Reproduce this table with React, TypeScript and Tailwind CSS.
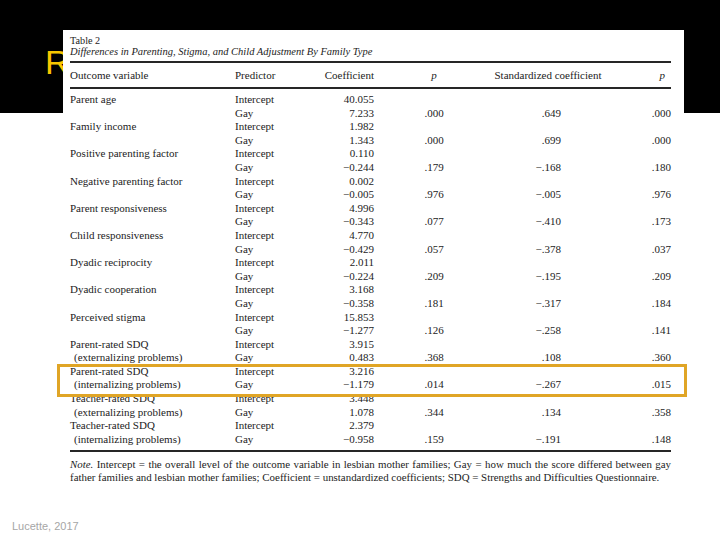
const rows: [string, string, string, string, string, string][] = [
  ["Parent age", "Intercept", "40.055", "", "", ""],
  ["", "Gay", "7.233", ".000", ".649", ".000"],
  ["Family income", "Intercept", "1.982", "", "", ""],
  ["", "Gay", "1.343", ".000", ".699", ".000"],
  ["Positive parenting factor", "Intercept", "0.110", "", "", ""],
  ["", "Gay", "\u22120.244", ".179", "\u2212.168", ".180"],
  ["Negative parenting factor", "Intercept", "0.002", "", "", ""],
  ["", "Gay", "\u22120.005", ".976", "\u2212.005", ".976"],
  ["Parent responsiveness", "Intercept", "4.996", "", "", ""],
  ["", "Gay", "\u22120.343", ".077", "\u2212.410", ".173"],
  ["Child responsiveness", "Intercept", "4.770", "", "", ""],
  ["", "Gay", "\u22120.429", ".057", "\u2212.378", ".037"],
  ["Dyadic reciprocity", "Intercept", "2.011", "", "", ""],
  ["", "Gay", "\u22120.224", ".209", "\u2212.195", ".209"],
  ["Dyadic cooperation", "Intercept", "3.168", "", "", ""],
  ["", "Gay", "\u22120.358", ".181", "\u2212.317", ".184"],
  ["Perceived stigma", "Intercept", "15.853", "", "", ""],
  ["", "Gay", "\u22121.277", ".126", "\u2212.258", ".141"],
  ["Parent-rated SDQ", "Intercept", "3.915", "", "", ""],
  ["(externalizing problems)", "Gay", "0.483", ".368", ".108", ".360"],
  ["Parent-rated SDQ", "Intercept", "3.216", "", "", ""],
  ["(internalizing problems)", "Gay", "\u22121.179", ".014", "\u2212.267", ".015"],
  ["Teacher-rated SDQ", "Intercept", "3.448", "", "", ""],
  ["(externalizing problems)", "Gay", "1.078", ".344", ".134", ".358"],
  ["Teacher-rated SDQ", "Intercept", "2.379", "", "", ""],
  ["(internalizing problems)", "Gay", "\u22120.958", ".159", "\u2212.191", ".148"],
]

const cols = "grid grid-cols-[165px_65px_74px_120px_108px_69px]"

function Rule() {
  return <div className="h-[2px] w-[601px] bg-[#262626]" />
}

export default function App() {
  return (
    <div className="relative flex h-[540px] w-[720px] flex-col overflow-hidden bg-white">
      {/* Slide title band, mostly covered by the table picture */}
      <div className="h-[113px] bg-black pl-[45px] pt-[45px]">
        <div className="font-['Liberation_Sans',Arial,sans-serif] text-[34px] leading-[34px] text-[#f8c600]">
          R
        </div>
      </div>
      <div className="flex-1" />
      <div className="pb-[7px] pl-[12px] font-['Liberation_Sans',Arial,sans-serif] text-[11px] leading-[13px] text-[#a6a6a6]">
        Lucette, 2017
      </div>

      {/* Table picture */}
      <div className="absolute left-[63px] top-[30px] h-[462px] w-[621px] bg-white pl-[7px] pt-[6px] font-['Liberation_Serif','Times_New_Roman',serif] text-[#1c1c1c]">
        <div className="h-[10px] text-[10.2px] leading-[10px]">Table 2</div>
        <div className="h-[11px] text-[10.5px] italic leading-[11px]">
          Differences in Parenting, Stigma, and Child Adjustment By Family Type
        </div>
        <div className="mt-[4px]">
          <Rule />
        </div>
        <div className={`${cols} h-[24px] items-center text-[11px]`}>
          <div>Outcome variable</div>
          <div>Predictor</div>
          <div className="text-right">Coefficient</div>
          <div className="text-center italic">p</div>
          <div className="text-center">Standardized coefficient</div>
          <div className="pr-[6px] text-right italic">p</div>
        </div>
        <Rule />
        <div className="mt-[4px] text-[11px]">
          {rows.map((r, i) => (
            <div key={i} className={`${cols} h-[13.6px] leading-[13.6px]`}>
              <div className={r[0].startsWith("(") ? "pl-[4px]" : ""}>{r[0]}</div>
              <div>{r[1]}</div>
              <div className="text-right">{r[2]}</div>
              <div className="text-center">{r[3]}</div>
              <div className="pr-[41px] text-right">{r[4]}</div>
              <div className="text-right">{r[5]}</div>
            </div>
          ))}
        </div>
        <div className="mt-[4px]">
          <Rule />
        </div>
        <div className="mt-[6px] w-[601px] text-[10.9px] leading-[13px]">
          <div className="whitespace-nowrap text-justify [text-align-last:justify]">
            <span className="italic">Note.</span> Intercept = the overall level of the outcome variable in lesbian mother families; Gay = how much the score differed between gay
          </div>
          <div className="whitespace-nowrap">
            father families and lesbian mother families; Coefficient = unstandardized coefficients; SDQ = Strengths and Difficulties Questionnaire.
          </div>
        </div>
      </div>

      {/* Highlight around the internalizing row */}
      <div className="absolute left-[57px] top-[364px] h-[33px] w-[630px] border-[3px] border-[#e0a526]" />
    </div>
  )
}
